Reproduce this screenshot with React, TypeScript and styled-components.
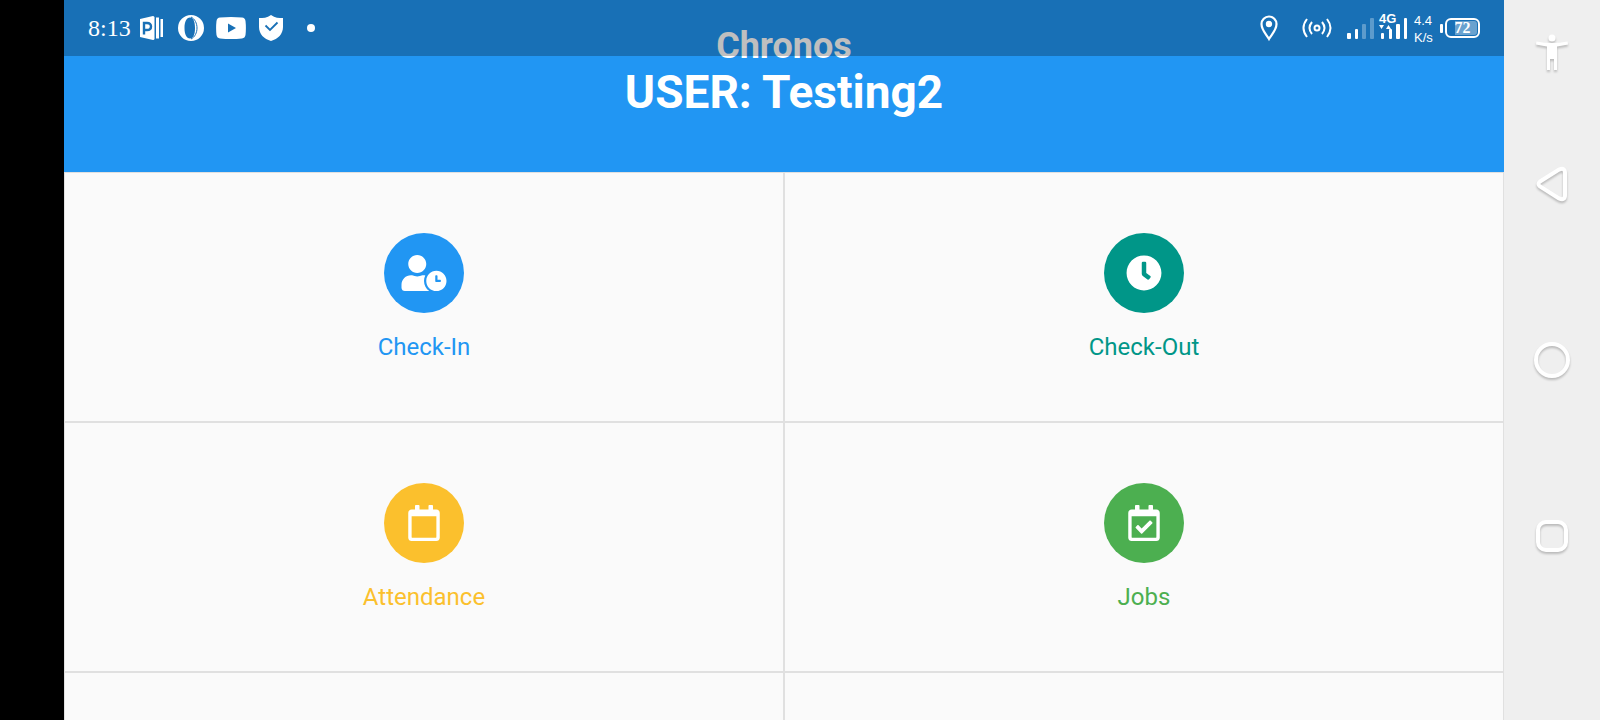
import React from "react";
import styled, { createGlobalStyle } from "styled-components";
import { FaClock, FaRegCalendar, FaRegCalendarCheck, FaUserClock } from "react-icons/fa";

const GlobalStyle = createGlobalStyle`
  * { box-sizing: border-box; }
  body { margin: 0; background: #000; font-family: Roboto, sans-serif; }
  button { font: inherit; border: 0; padding: 0; background: none; cursor: pointer; }
  svg { display: block; flex: none; }
`;

const Screen = styled.div`
  display: flex;
  height: 100vh;
  padding-left: 64px;
  overflow: hidden;
`;

const AppArea = styled.main`
  position: relative;
  flex: 1;
  min-width: 0;
  overflow: hidden;
  background: #fafafa;
`;

const StatusBar = styled.div`
  position: absolute;
  top: 0;
  left: 0;
  right: 0;
  display: flex;
  justify-content: space-between;
  align-items: center;
  height: 56px;
  padding: 0 24px;
  background: rgba(0, 0, 0, 0.25);
  color: #fff;
`;

const StatusGroup = styled.div<{ $gap: number }>`
  display: flex;
  align-items: center;
  gap: ${(p) => p.$gap}px;
`;

const Time = styled.time`
  width: 40px;
  font: 24px/32px "Liberation Serif", serif;
  white-space: nowrap;
`;

const Speed = styled.div`
  width: 24px;
  padding: 2px 0 0 2px;
  font: 13px/17px "Liberation Sans", sans-serif;
  white-space: nowrap;
`;

const Battery = styled.div`
  display: flex;
  align-items: center;
  gap: 2px;
`;

const BatteryNub = styled.span`
  width: 3px;
  height: 9px;
  border-radius: 1px;
  background: #fff;
`;

const BatteryBody = styled.span`
  width: 35px;
  height: 20px;
  padding: 1px;
  border: 2px solid #fff;
  border-radius: 6px;
`;

const BatteryFill = styled.span`
  display: block;
  border-radius: 3px;
  background: linear-gradient(90deg, transparent 25%, rgba(255, 255, 255, 0.35) 25%);
  font: bold 16px/14px "Liberation Serif", serif;
  text-align: center;
`;

const Header = styled.header`
  display: flex;
  flex-direction: column;
  align-items: center;
  height: 172px;
  padding-top: 24px;
  background: #2196f3;
  color: #fff;
`;

const AppName = styled.h1`
  margin: 0;
  font-size: 36px;
  line-height: 44px;
  font-weight: 700;
`;

const UserName = styled.h2`
  margin: 0;
  font-size: 46px;
  line-height: 48px;
  font-weight: 700;
`;

const Tiles = styled.div`
  display: grid;
  grid-template-columns: 1fr 1fr;
  grid-auto-rows: 248px;
  gap: 2px;
  padding: 1px;
  background: #e0e0e0;
`;

const Tile = styled.button<{ $color: string }>`
  display: flex;
  flex-direction: column;
  align-items: center;
  gap: 20px;
  padding-top: 60px;
  background: #fafafa;
  color: ${(p) => p.$color};
  font-size: 24px;
  line-height: 28px;
`;

const EmptyTile = styled.div`
  background: #fafafa;
`;

const Disc = styled.span<{ $color: string }>`
  display: flex;
  align-items: center;
  justify-content: center;
  width: 80px;
  height: 80px;
  border-radius: 50%;
  background: ${(p) => p.$color};
  color: #fff;

  svg { width: 46px; height: 36px; }
`;

const NavBar = styled.nav`
  display: flex;
  flex-direction: column;
  width: 96px;
  padding: 8px 0 96px;
  background: #efefef;
`;

const NavButton = styled.button<{ $small?: boolean }>`
  display: flex;
  align-items: center;
  justify-content: center;
  flex: ${(p) => (p.$small ? "0 0 88px" : "1")};
  color: #fff;

  svg { overflow: visible; filter: drop-shadow(0 2px 1px rgba(0, 0, 0, 0.22)); }
`;

const tiles = [
  { label: "Check-In", color: "#2196f3", Icon: FaUserClock },
  { label: "Check-Out", color: "#009688", Icon: FaClock },
  { label: "Attendance", color: "#fbc02d", Icon: FaRegCalendar },
  { label: "Jobs", color: "#4caf50", Icon: FaRegCalendarCheck },
];

function PresentationIcon() {
  return (
    <svg width="24" height="26" viewBox="0 0 24 26">
      <path d="M0 4 13 1q1.500 0 1.500 1.500v21q0 1.500-1.500 1.500L0 22z" fill="#fff" />
      <path d="M4 19.500V8h3q4 0 4 3.500T7 15H4" fill="none" stroke="#1970b6" strokeWidth="2.400" />
      <path d="M16 2.500h3v21h-3zM20.500 4h2.500v18h-2.500z" fill="#fff" />
    </svg>
  );
}

function OperaIcon() {
  return (
    <svg width="28" height="28" viewBox="0 0 28 28">
      <path fill="#fff" fillRule="evenodd" d="M15 1a13 13 0 1 0 0 26 13 13 0 0 0 0-26ZM14 3.500c3.500 0 5 4.500 5 10.500s-1.500 10.500-5 10.500S8.500 20 8.500 14s2-10.500 5.500-10.500Z" />
      <path d="M15 3c8 4 8 18 0 22" fill="none" stroke="#1970b6" strokeWidth="1" />
    </svg>
  );
}

function VideoIcon() {
  return (
    <svg width="30" height="22" viewBox="0 0 30 22">
      <path fill="#fff" fillRule="evenodd" d="M4 .5Q15-.5 26 .5q3 .3 3.500 3.500.8 7 0 14-.5 3-3.500 3.500-11 1-22 0Q1 21 .5 18q-.8-7 0-14Q1 .8 4 .5ZM12 6.500v9l8-4.500z" />
    </svg>
  );
}

function ShieldIcon() {
  return (
    <svg width="26" height="28" viewBox="0 0 26 28">
      <path fill="#fff" d="M13 1c4 3 8 3 12 3v9c0 7-5 12-12 14C6 25 1 20 1 13V4c4 0 8 0 12-3Z" />
      <path d="m7.500 11.500 4.500 4.500 7.500-7.500" fill="none" stroke="#1970b6" strokeWidth="1.800" />
    </svg>
  );
}

function PinIcon() {
  return (
    <svg width="28" height="28" viewBox="0 0 28 28">
      <path d="M9 25C6 20 1.500 16 1.500 10a7.500 7.500 0 0 1 15 0c0 6-4.500 10-7.500 15Z" fill="none" stroke="#fff" strokeWidth="2.200" />
      <circle cx="9" cy="10" r="3.200" fill="#fff" />
    </svg>
  );
}

function HotspotIcon() {
  return (
    <svg width="30" height="28" viewBox="0 0 30 28" fill="none" stroke="#fff" strokeWidth="2">
      <circle cx="15" cy="14" r="2.500" />
      <path d="M10 8q-5 6 0 12M20 8q5 6 0 12M5 5q-7 9 0 18M25 5q7 9 0 18" />
    </svg>
  );
}

function SignalIcon() {
  return (
    <svg width="28" height="30" viewBox="0 0 28 30" fill="#fff">
      <rect x="1" y="20" width="4" height="6" rx="1" />
      <rect x="9" y="16" width="3" height="10" rx="1" />
      <rect x="16" y="11" width="4" height="15" rx="1" opacity=".3" />
      <rect x="24" y="5" width="4" height="21" rx="1" opacity=".3" />
    </svg>
  );
}

function MobileDataIcon() {
  return (
    <svg width="30" height="36" viewBox="0 -3 30 36" fill="#fff">
      <text x="1" y="10" fontFamily="Liberation Sans, sans-serif" fontSize="13" fontWeight="700">4G</text>
      <path d="M1 12h5l-2.500 4zM8 16l2.500-4 2.500 4z" />
      <rect x="3" y="20" width="3" height="6" rx="1" />
      <rect x="11" y="16" width="3" height="10" rx="1" />
      <rect x="18" y="11" width="4" height="15" rx="1" />
      <rect x="26" y="5" width="3" height="21" rx="1" />
    </svg>
  );
}

function MoreDot() {
  return (
    <svg width="30" height="8" viewBox="0 0 30 8">
      <circle cx="15" cy="4" r="4" fill="#fff" />
    </svg>
  );
}

export default function App() {
  return (
    <>
      <GlobalStyle />
      <Screen>
        <AppArea>
          <Header>
            <AppName>Chronos</AppName>
            <UserName>USER: Testing2</UserName>
          </Header>
          <Tiles>
            {tiles.map(({ label, color, Icon }) => (
              <Tile key={label} $color={color}>
                <Disc $color={color}><Icon /></Disc>
                <span>{label}</span>
              </Tile>
            ))}
            <EmptyTile />
            <EmptyTile />
          </Tiles>
          <StatusBar>
            <StatusGroup $gap={12}>
              <Time>8:13</Time>
              <PresentationIcon />
              <OperaIcon />
              <VideoIcon />
              <ShieldIcon />
              <MoreDot />
            </StatusGroup>
            <StatusGroup $gap={14}>
              <PinIcon />
              <HotspotIcon />
              <StatusGroup $gap={4}>
                <SignalIcon />
                <MobileDataIcon />
                <Speed>4.4<br />K/s</Speed>
                <Battery>
                  <BatteryNub />
                  <BatteryBody><BatteryFill>72</BatteryFill></BatteryBody>
                </Battery>
              </StatusGroup>
            </StatusGroup>
          </StatusBar>
        </AppArea>
        <NavBar>
          <NavButton $small aria-label="Accessibility">
            <svg width="32" height="36" viewBox="0 0 32 36" fill="#fff">
              <circle cx="16" cy="4" r="3.500" />
              <path d="M.5 7.500Q16 10.500 31.500 7.500l.5 3-11 2V36h-3V25h-4v11h-3V12.500l-11-2z" />
            </svg>
          </NavButton>
          <NavButton aria-label="Back">
            <svg width="32" height="36" viewBox="0 0 32 36" fill="none" stroke="#fff" strokeWidth="4">
              <path d="M4 15.500 23 3.600Q29 1 29 7v22q0 6-6 3.400L4 20.500q-3-2.500 0-5Z" />
            </svg>
          </NavButton>
          <NavButton aria-label="Home">
            <svg width="36" height="36" viewBox="0 0 36 36" fill="none" stroke="#fff" strokeWidth="4">
              <circle cx="18" cy="18" r="16" />
            </svg>
          </NavButton>
          <NavButton aria-label="Recent apps">
            <svg width="32" height="32" viewBox="0 0 32 32" fill="none" stroke="#fff" strokeWidth="4">
              <rect x="2" y="2" width="28" height="28" rx="8" />
            </svg>
          </NavButton>
        </NavBar>
      </Screen>
    </>
  );
}
